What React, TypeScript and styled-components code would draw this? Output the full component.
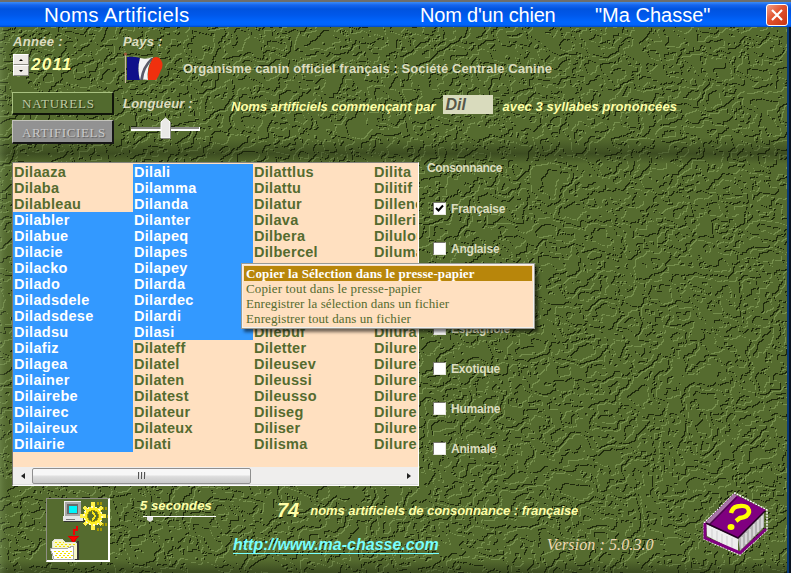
import React from "react";
import styled, { createGlobalStyle, css } from "styled-components";

const Global = createGlobalStyle`
  * { box-sizing: border-box; }
  html, body { margin: 0; padding: 0; overflow: hidden; }
  body { font-family: "Liberation Sans", Arial, sans-serif; background: #556b2f; }
`;

const Window = styled.main`
  position: relative;
  isolation: isolate;
  width: 791px;
  height: 573px;
  overflow: hidden;
  display: flex;
  flex-direction: column;
  background: #556b2f;
`;

const TextureLayer = styled.svg`
  position: absolute;
  inset: 0;
  z-index: -1;
  width: 791px;
  height: 573px;
`;

const TitleBar = styled.header`
  flex: none;
  height: 27px;
  display: flex;
  align-items: center;
  padding: 1px 3px 0 44px;
  border-top: 2px solid #6d6d6b;
  background: linear-gradient(#3b8cf5 0, #1565ee 3px, #0053df 7px, #0058ea 13px, #0066ff 20px, #0064fa 23px, #0046c4 25px);
  color: #fff;
  font-size: 20px;
  line-height: 24px;
  white-space: pre;
`;

const TitleText = styled.span<{ $w: number; $ls?: number; $size?: number }>`
  flex: none;
  width: ${(p) => p.$w}px;
  font-size: ${(p) => p.$size ?? 20}px;
  letter-spacing: ${(p) => p.$ls ?? 0}px;
`;

const CloseButton = styled.button`
  flex: none;
  margin: 0 0 0 auto;
  width: 22px;
  height: 22px;
  padding: 0;
  border: 1px solid #fff;
  border-radius: 3px;
  background: linear-gradient(135deg, #f0a088, #e2532f 45%, #c93412);
  display: grid;
  place-items: center;
`;

const Top = styled.section`
  flex: none;
  height: 135px;
  padding-left: 12px;
  display: grid;
  grid-template-columns: 110px 1fr;
  grid-template-rows: 65px 70px;
`;

const Stack = styled.div<{ $pt?: number; $pl?: number }>`
  display: flex;
  flex-direction: column;
  align-items: flex-start;
  padding-top: ${(p) => p.$pt ?? 0}px;
  padding-left: ${(p) => p.$pl ?? 0}px;
`;

const Row = styled.div<{ $h?: number; $align?: string }>`
  display: flex;
  align-items: ${(p) => p.$align ?? "flex-start"};
  height: ${(p) => (p.$h ? `${p.$h}px` : "auto")};
`;

const Label = styled.span<{
  $size: number;
  $color?: string;
  $italic?: boolean;
  $ls?: number;
  $mt?: number;
  $ml?: number;
}>`
  display: block;
  font-weight: bold;
  font-size: ${(p) => p.$size}px;
  line-height: 16px;
  font-style: ${(p) => (p.$italic ? "italic" : "normal")};
  color: ${(p) => p.$color ?? "#ddddc0"};
  letter-spacing: ${(p) => p.$ls ?? 0}px;
  margin-top: ${(p) => p.$mt ?? 0}px;
  margin-left: ${(p) => p.$ml ?? 0}px;
  white-space: pre;
`;

const Spinner = styled.div`
  width: 16px;
  height: 22px;
  margin: 4px 0 0 1px;
  display: grid;
  grid-template-rows: 11px 11px;
`;

const SpinButton = styled.button<{ $down?: boolean }>`
  padding: 0;
  border: 1px solid;
  border-color: #fff #8b8b83 #8b8b83 #fff;
  background: #ece9e4;
  display: grid;
  place-items: center;
  &::after {
    content: "";
    border: 2px solid transparent;
    ${(p) =>
      p.$down
        ? css`border-top-color: #000; border-bottom: 0;`
        : css`border-bottom-color: #000; border-top: 0;`}
  }
`;

const ModeButton = styled.button<{ $active?: boolean }>`
  width: 102px;
  height: ${(p) => (p.$active ? 24 : 23)}px;
  margin-bottom: 5px;
  padding: 2px 0 0 9px;
  text-align: left;
  border: 1px solid;
  border-width: 1px 2px 2px 1px;
  border-color: ${(p) => (p.$active ? "#c4c4bc #161616 #161616 #c4c4bc" : "#a9c181 #10150a #10150a #a9c181")};
  background: ${(p) => (p.$active ? "#929292" : "#526a2e")};
  color: ${(p) => (p.$active ? "#c9c9c9" : "#c0cba4")};
  text-shadow: 1px 1px 1px ${(p) => (p.$active ? "#5c5c5c" : "#1f2a10")};
  font: 13px/18px "Liberation Serif", "Times New Roman", serif;
  letter-spacing: ${(p) => (p.$active ? 0.6 : 0.8)}px;
`;

const PrefixInput = styled.span`
  flex: none;
  width: 50px;
  height: 19px;
  margin: 3px 0 0 8px;
  padding-left: 2px;
  background: #d9dbbd;
  color: #575749;
  font: italic bold 16px/20px "Liberation Sans", Arial, sans-serif;
`;

const Middle = styled.section`
  flex: none;
  height: 325px;
  padding-left: 12px;
  display: flex;
`;

const ListBox = styled.div`
  flex: none;
  width: 407px;
  height: 324px;
  border: 1px solid;
  border-color: #85857d #fff #fff #77776f;
  background: #ffe0c0;
  padding-top: 1px;
  display: flex;
  flex-direction: column;
  overflow: hidden;
`;

const Columns = styled.div`
  flex: 1;
  min-height: 0;
  overflow: hidden;
  margin-right: 1px;
  display: grid;
  grid-template-columns: repeat(4, 120px);
`;

const Name = styled.div<{ $sel: boolean }>`
  height: 16px;
  padding-left: 1px;
  font-size: 14.5px;
  font-weight: bold;
  line-height: 17px;
  letter-spacing: 0.3px;
  color: ${(p) => (p.$sel ? "#fff" : "#556b2f")};
  background: ${(p) => (p.$sel ? "#3399ff" : "transparent")};
`;

const ScrollBar = styled.div`
  flex: none;
  height: 18px;
  background: #efeeed;
  display: flex;
  align-items: center;
  border-bottom: 1px solid #ddd;
`;

const ScrollArrow = styled.span<{ $right?: boolean }>`
  flex: none;
  width: 19px;
  height: 17px;
  display: grid;
  place-items: center;
  margin-left: ${(p) => (p.$right ? "auto" : "0")};
  &::after {
    content: "";
    border: 3px solid transparent;
    ${(p) =>
      p.$right
        ? css`border-left: 4px solid #222; border-right: 0;`
        : css`border-right: 4px solid #222; border-left: 0;`}
  }
`;

const Thumb = styled.div`
  width: 219px;
  height: 16px;
  border: 1px solid #8f8f8f;
  border-radius: 2px;
  background: linear-gradient(#f7f7f7 0 40%, #dcdcdc 55%, #cacaca);
  display: flex;
  justify-content: center;
  align-items: center;
  gap: 1px;
`;

const Grip = styled.i`
  width: 2px;
  height: 7px;
  background: linear-gradient(90deg, #555 1px, #ddd 1px);
`;

const Choice = styled.label<{ $covered?: boolean }>`
  display: flex;
  align-items: center;
  height: 40px;
  gap: 5px;
  padding-left: 6px;
  visibility: ${(p) => (p.$covered ? "hidden" : "visible")};
`;

const Box = styled.span`
  width: 13px;
  height: 13px;
  margin-top: -1px;
  background: #fff;
  border: 1px solid;
  border-color: #77776e #e8e8e0 #e8e8e0 #77776e;
  display: grid;
  place-items: center;
`;

const Menu = styled.ul`
  position: absolute;
  left: 241px;
  top: 263px;
  width: 294px;
  height: 66px;
  margin: 0;
  padding: 1px;
  list-style: none;
  background: #ffe0c0;
  border: 2px solid #f0f0ee;
  outline: 1px solid #9a9a92;
  outline-offset: -1px;
  box-shadow: 3px 3px 3px rgba(0, 0, 0, 0.55);
`;

const MenuItem = styled.li<{ $active?: boolean; $ls: number }>`
  height: 15px;
  padding-left: 2px;
  font: ${(p) => (p.$active ? "bold" : "normal")} 13px/15px "Liberation Serif", "Times New Roman", serif;
  letter-spacing: ${(p) => p.$ls}px;
  color: ${(p) => (p.$active ? "#fff" : "#556b2f")};
  background: ${(p) => (p.$active ? "#b8860b" : "transparent")};
  white-space: nowrap;
`;

const Bottom = styled.footer`
  flex: none;
  height: 86px;
  display: grid;
  grid-template-columns: 139px 93px 466px 1fr;
`;

const TransferButton = styled.button`
  width: 64px;
  height: 64px;
  margin: 11px 0 0 46px;
  padding: 0;
  border: 1px solid;
  border-color: #8e8e84 #fff #fff #8e8e84;
  border-right-width: 2px;
  border-bottom-width: 2px;
  background: #556b2f;
  overflow: hidden;
`;

const Link = styled.a`
  height: 18px;
  margin-left: 1px;
  color: #7ff;
  font-size: 16px;
  line-height: 17px;
  font-style: italic;
  font-weight: bold;
  letter-spacing: 0;
  text-decoration: none;
  border-bottom: 1px solid #7ff;
`;

const Version = styled.span`
  color: #efd9b4;
  font: italic 16px/18px "Liberation Serif", "Times New Roman", serif;
  letter-spacing: 0.1px;
  margin-left: 108px;
`;

const columns: string[][] = [
  ["Dilaaza", "Dilaba", "Dilableau", "Dilabler", "Dilabue", "Dilacie", "Dilacko", "Dilado", "Diladsdele", "Diladsdese", "Diladsu", "Dilafiz", "Dilagea", "Dilainer", "Dilairebe", "Dilairec", "Dilaireux", "Dilairie"],
  ["Dilali", "Dilamma", "Dilanda", "Dilanter", "Dilapeq", "Dilapes", "Dilapey", "Dilarda", "Dilardec", "Dilardi", "Dilasi", "Dilateff", "Dilatel", "Dilaten", "Dilatest", "Dilateur", "Dilateux", "Dilati"],
  ["Dilattlus", "Dilattu", "Dilatur", "Dilava", "Dilbera", "Dilbercel", "", "", "", "", "Dilebuf", "Diletter", "Dileusev", "Dileussi", "Dileusso", "Diliseg", "Diliser", "Dilisma"],
  ["Dilita", "Dilitif", "Dillenc", "Dilleri", "Dilulou", "Diluma", "", "", "", "", "Dilural", "Dilures", "Dilures", "Dilures", "Diluret", "Dilureu", "Dilureu", "Dilurex"],
];
const isSelected = (c: number, r: number) => (c === 0 && r >= 3) || (c === 1 && r <= 10);

const choices = ["Française", "Anglaise", "", "Espagnole", "Exotique", "Humaine", "Animale"];

const contourLevels = "0 0 0 0 0 0 1 1 1 0 0 1 1 1 0 0 0 0 0 0";

function Texture() {
  return (
    <TextureLayer aria-hidden="true">
      <defs>
        <filter id="leather" x="0" y="0" width="100%" height="100%" colorInterpolationFilters="sRGB">
          <feTurbulence type="fractalNoise" baseFrequency="0.032 0.036" numOctaves="5" seed="11" />
          <feColorMatrix values="1 0 0 0 0  1 0 0 0 0  1 0 0 0 0  0 0 0 0 1" />
          <feComponentTransfer>
            <feFuncR type="discrete" tableValues={contourLevels} />
            <feFuncG type="discrete" tableValues={contourLevels} />
            <feFuncB type="discrete" tableValues={contourLevels} />
          </feComponentTransfer>
          <feConvolveMatrix order="3" kernelMatrix="0 0 0 0 0.25 0 0 0 -0.25" divisor="1" bias="0.5" preserveAlpha="true" />
          <feComponentTransfer>
            <feFuncR type="table" tableValues="0 0.12 0.333 0.46 0.6" />
            <feFuncG type="table" tableValues="0 0.16 0.42 0.56 0.7" />
            <feFuncB type="table" tableValues="0 0.05 0.184 0.3 0.4" />
          </feComponentTransfer>
        </filter>
        <linearGradient id="seam" x1="0" x2="0" y1="0" y2="1">
          <stop offset="0" stopColor="#18200c" stopOpacity="0" />
          <stop offset="0.6" stopColor="#18200c" stopOpacity="0.4" />
          <stop offset="1" stopColor="#18200c" stopOpacity="0" />
        </linearGradient>
        <linearGradient id="edge">
          <stop offset="0" stopColor="#8aa56c" stopOpacity="0.35" />
          <stop offset="1" stopColor="#304018" stopOpacity="0" />
        </linearGradient>
      </defs>
      <rect width="791" height="573" filter="url(#leather)" />
      <rect y="138" width="791" height="26" fill="url(#seam)" />
      <rect y="560" width="791" height="20" fill="url(#seam)" />
      <rect width="12" height="573" fill="url(#edge)" />
      <rect x="787" width="2" height="573" fill="#0a3b77" />
      <rect x="789" width="2" height="573" fill="#0b1420" />
    </TextureLayer>
  );
}

function Flag() {
  return (
    <svg width="40" height="34" viewBox="0 0 40 34">
      <path d="M2.500 4V33" stroke="#c9b9a0" strokeWidth="1.200" />
      <circle cx="2.500" cy="4" r="1.500" fill="#a05a3c" />
      <path d="M4 7Q10 6 17 8Q14 19 17 30H4Z" fill="#10108a" />
      <path d="M17 8Q23 10 30 7Q23 18 25 30Q21 29 17 30Q14 19 17 8Z" fill="#f4f4f6" />
      <path d="M28 8Q19 16 17 30L20 30Q21 18 31 8Z" fill="#5a5a68" />
      <path d="M30 8Q35 5 38 10Q41 15 38 20Q36 26 33 30H25Q24 18 30 8Z" fill="#f0300e" />
    </svg>
  );
}

function LengthSlider() {
  return (
    <svg width="80" height="28" viewBox="0 0 80 28">
      <path d="M13.500 1V4M28.500 1V4M42.500 1V4M57.500 1V4M71.500 1V4" stroke="#151a0c" />
      <rect x="8" y="15" width="69" height="4" fill="#fff" />
      <path d="M8 15.500H76M8 16.500H76" stroke="#8c8c86" />
      <path d="M38 26V10L42.500 6L47 10V26Z" fill="#e9e9e6" stroke="#fff" />
      <path d="M47.500 10V26.500H38" fill="none" stroke="#8a8a84" />
    </svg>
  );
}

function TransferIcon() {
  return (
    <svg width="62" height="62" viewBox="0 0 62 62" shapeRendering="crispEdges">
      <path d="M17 2H34V17H17Z" fill="#a8a8a8" />
      <path d="M17 17V2H34" fill="none" stroke="#eee" />
      <rect x="20" y="5" width="11" height="10" fill="#686868" />
      <rect x="22" y="7" width="8" height="7" fill="#00f4fa" />
      <path d="M16 17H36V22H16Z" fill="#e6e6e6" />
      <path d="M17 22.500H37V18" fill="none" stroke="#333" />
      <path d="M19 20.500H28" stroke="#777" />
      <g transform="translate(46 17)">
        <path d="M4 -13H10M9 -8H15M11 0H16M9 8H15M4 13H10" stroke="#a59a00" strokeWidth="3" strokeDasharray="2 1" />
        <path d="M0 -14V14M-13 0H13M-9 -9L9 9M-9 9L9 -9" stroke="#fff04a" strokeWidth="3.500" />
        <circle r="7.500" fill="none" stroke="#ffee24" strokeWidth="4" />
        <circle r="9" fill="none" stroke="#fffcc8" strokeWidth="1.500" strokeDasharray="2 2" />
        <circle r="5.500" fill="#556b2f" stroke="#a59a00" />
        <path d="M-1 -4Q5 0 -1 4" stroke="#f7e716" strokeWidth="2" fill="none" />
      </g>
      <path d="M30 27V31H27V36" fill="none" stroke="#e00" strokeWidth="2" />
      <path d="M21 37H32L26.500 43Z" fill="#f00" stroke="#d00" />
      <path d="M5 44L8 40H15L18 43H28L30 45V60H6Z" fill="#f8f7c8" stroke="#ddd" />
      <path d="M31 42V60.500H9" fill="none" stroke="#333" strokeWidth="2" />
      <g stroke="#f0e000" strokeDasharray="2 2">
        <path d="M8 43.500H17M10 45.500H28M8 47.500H28" />
      </g>
      <path d="M3 49H21L26 47L27 60H7Z" fill="#fff" stroke="#aaa" />
      <g stroke="#f0e000" strokeDasharray="2 2">
        <path d="M7 52.500H25M9 54.500H25M8 56.500H26M10 58.500H26" />
      </g>
    </svg>
  );
}

function HelpBook() {
  return (
    <svg width="68" height="66" viewBox="0 0 68 66">
      <path d="M2 31L33 1L65 18V38L38 63L2 47Z" fill="none" stroke="#fff" strokeWidth="1.500" strokeDasharray="2 1" />
      <path d="M3 31L32 2L64 18L36 46Z" fill="#800080" />
      <path d="M3 31L32 2L35 3.500L7 33Z" fill="#a675a6" />
      <path d="M7 33L35 5" stroke="#4e004e" strokeWidth="1.500" />
      <path d="M4 32L36 46V60L5 44Z" fill="#eee" />
      <path d="M36 46L62 20V35L38 59Z" fill="#b4b4b4" />
      <path d="M40 45V56M44 41V52M48 37V48M52 32V44M56 28V40M60 24V36" stroke="#e2e2e2" strokeWidth="1.500" />
      <path d="M10 37V46M15 39V49M20 42V51M25 44V54M30 46V57" stroke="#cfcfcf" />
      <path d="M3 31V46L38 61L64 37" stroke="#800080" strokeWidth="3" fill="none" />
      <path d="M4 31L36 46L63 19" fill="none" stroke="#230023" strokeWidth="1.500" />
      <path d="M29 21Q31 14 38 14Q47 13 47 20Q46 25 38 26L34 29" fill="none" stroke="#ff0" strokeWidth="4.500" />
      <ellipse cx="29" cy="35" rx="3.500" ry="3" fill="#ff0" />
    </svg>
  );
}

export default function App() {
  return (
    <Window>
      <Global />
      <Texture />
      <TitleBar>
        <TitleText $w={376} $size={20.5} $ls={0.35}>Noms Artificiels</TitleText>
        <TitleText $w={175} $ls={-0.2}>Nom d'un chien</TitleText>
        <TitleText $w={120}>"Ma Chasse"</TitleText>
        <CloseButton aria-label="Fermer">
          <svg width="14" height="14" viewBox="0 0 14 14"><path d="M2 2L12 12M12 2L2 12" stroke="#fff" strokeWidth="2.200" /></svg>
        </CloseButton>
      </TitleBar>

      <Top>
        <Stack $pt={7}>
          <Label $size={13} $italic $ls={0.3} $ml={1}>Année :</Label>
          <Row>
            <Spinner><SpinButton /><SpinButton $down /></Spinner>
            <Label $size={17} $italic $color="#ffffa8" $ls={1.2} $mt={7} $ml={2}>2011</Label>
          </Row>
        </Stack>
        <Row>
          <Stack $pt={7} $pl={1}>
            <Label $size={13} $italic $ls={0.2}>Pays :</Label>
            <Row $h={34}><Flag /></Row>
          </Stack>
          <Label $size={13} $mt={34} $ml={20} $ls={0.07}>Organisme canin officiel français : Société Centrale Canine</Label>
        </Row>
        <Stack>
          <ModeButton>NATURELS</ModeButton>
          <ModeButton $active>ARTIFICIELS</ModeButton>
        </Stack>
        <Row>
          <Stack $pt={4} $pl={1}>
            <Label $size={13} $italic $ls={0.2}>Longueur :</Label>
            <LengthSlider />
          </Stack>
          <Label $size={13} $italic $color="#ffffa8" $mt={7} $ml={28} $ls={0}>Noms artificiels commençant par</Label>
          <PrefixInput>Dil</PrefixInput>
          <Label $size={13} $italic $color="#ffffa8" $mt={7} $ml={9} $ls={0.1}>avec 3 syllabes prononcées</Label>
        </Row>
      </Top>

      <Middle>
        <ListBox>
          <Columns>
            {columns.map((names, c) => (
              <div key={c}>
                {names.map((n, r) => <Name key={r} $sel={isSelected(c, r)}>{n}</Name>)}
              </div>
            ))}
          </Columns>
          <ScrollBar>
            <ScrollArrow />
            <Thumb><Grip /><Grip /><Grip /></Thumb>
            <ScrollArrow $right />
          </ScrollBar>
        </ListBox>
        <Stack $pl={8}>
          <Label $size={12} $mt={-2} $ls={-0.4}>Consonnance</Label>
          <Row $h={13} />
          {choices.map((c, i) => (
            <Choice key={i} $covered={!c}>
              <Box>
                {i === 0 && <svg width="9" height="9" viewBox="0 0 9 9"><path d="M1 4L3.500 6.500L8 1.500" fill="none" stroke="#000" strokeWidth="2" /></svg>}
              </Box>
              <Label $size={12} $ls={-0.2}>{c}</Label>
            </Choice>
          ))}
        </Stack>
      </Middle>

      <Bottom>
        <TransferButton aria-label="Transférer"><TransferIcon /></TransferButton>
        <Stack $pt={11}>
          <Label $size={13} $italic $color="#ffffa8" $ls={0.1} $ml={1}>5 secondes</Label>
          <svg width="80" height="10" viewBox="0 0 80 10">
            <path d="M4 2.500H77" stroke="#fff" />
            <path d="M8 3H14V6L11 8L8 6Z" fill="#e4e4e4" />
          </svg>
        </Stack>
        <Stack $pt={15}>
          <Row $h={34}>
            <Label $size={20} $italic $color="#ffffa8" $ml={45}>74</Label>
            <Label $size={13} $italic $color="#ffffa8" $mt={1} $ml={11} $ls={-0.05}>noms artificiels de consonnance : française</Label>
          </Row>
          <Row>
            <Link href="#">http://www.ma-chasse.com</Link>
            <Version>Version : 5.0.3.0</Version>
          </Row>
        </Stack>
        <Stack $pt={5} $pl={4}><HelpBook /></Stack>
      </Bottom>

      <Menu>
        <MenuItem $active $ls={0.1}>Copier la Sélection dans le presse-papier</MenuItem>
        <MenuItem $ls={0.14}>Copier tout dans le presse-papier</MenuItem>
        <MenuItem $ls={0.07}>Enregistrer la sélection dans un fichier</MenuItem>
        <MenuItem $ls={0.1}>Enregistrer tout dans un fichier</MenuItem>
      </Menu>
    </Window>
  );
}
